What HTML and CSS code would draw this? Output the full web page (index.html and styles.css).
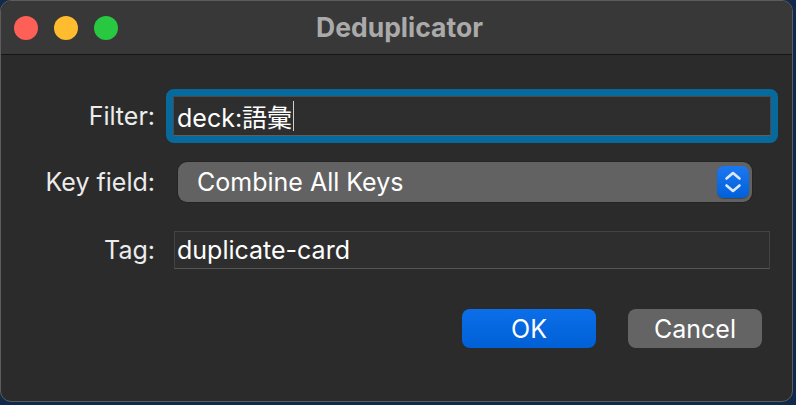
FILE: index.html
```html
<!DOCTYPE html>
<html lang="en">
<head>
<meta charset="utf-8">
<title>Deduplicator</title>
<link rel="stylesheet" href="styles.css">
</head>
<body>
<div class="window">
  <div class="titlebar">
    <div class="lights">
      <span class="light red"></span>
      <span class="light yellow"></span>
      <span class="light green"></span>
    </div>
    <div class="title">Deduplicator</div>
  </div>
  <div class="content">
    <div class="row row-filter">
      <label class="label">Filter:</label>
      <div class="focus-ring">
        <div class="field field-focused"><span class="value">deck:語彙</span><span class="caret"></span></div>
      </div>
    </div>
    <div class="row row-key">
      <label class="label">Key field:</label>
      <div class="popup">
        <span class="popup-text">Combine All Keys</span>
        <span class="stepper">
          <svg width="32" height="32" viewBox="0 0 32 32" aria-hidden="true">
            <polyline points="9.5,12.5 16,7 22.5,12.5" fill="none" stroke="#dbe7ff" stroke-width="2.6" stroke-linecap="round" stroke-linejoin="round"/>
            <polyline points="9.5,19.5 16,25 22.5,19.5" fill="none" stroke="#dbe7ff" stroke-width="2.6" stroke-linecap="round" stroke-linejoin="round"/>
          </svg>
        </span>
      </div>
    </div>
    <div class="row row-tag">
      <label class="label">Tag:</label>
      <div class="field field-tag"><span class="value">duplicate-card</span></div>
    </div>
    <div class="buttons">
      <button class="btn btn-primary">OK</button>
      <button class="btn btn-secondary">Cancel</button>
    </div>
  </div>
</div>
</body>
</html>
```

FILE: styles.css
```css
html, body {
  margin: 0;
  padding: 0;
}

body {
  width: 796px;
  height: 405px;
  background: #11294a;
  overflow: hidden;
  font-family: "Inter", "Noto Sans CJK JP", sans-serif;
  color: #ffffff;
}

.window {
  width: 791px;
  height: 400px;
  border: 1px solid #5c5c5c;
  border-radius: 11px;
  background: #2b2b2b;
  overflow: hidden;
  display: flex;
  flex-direction: column;
}

.titlebar {
  height: 53px;
  flex: 0 0 53px;
  background: #383838;
  border-bottom: 1px solid #161616;
  display: flex;
  align-items: center;
  position: relative;
}

.lights {
  display: flex;
  gap: 16px;
  padding-left: 13px;
}

.light {
  width: 24px;
  height: 24px;
  border-radius: 50%;
  display: block;
}

.red { background: #fe5f57; }
.yellow { background: #febc2e; }
.green { background: #28c840; }

.title {
  position: absolute;
  left: 0;
  right: 0;
  top: 0;
  bottom: 0;
  display: flex;
  align-items: center;
  justify-content: center;
  font-size: 26.5px;
  font-weight: 700;
  color: #aaaaaa;
  padding-left: 6px;
  padding-bottom: 1px;
}

.content {
  flex: 1;
  display: flex;
  flex-direction: column;
}

.row {
  display: flex;
  align-items: center;
}

.label {
  width: 154px;
  flex: 0 0 154px;
  text-align: right;
  font-size: 25px;
  color: #ececec;
}

.row-filter {
  margin-top: 34px;
  height: 54px;
}

.focus-ring {
  margin-left: 11px;
  width: 598px;
  height: 40px;
  border: 7px solid #08699c;
  border-radius: 8px;
}

.field {
  box-sizing: border-box;
  display: flex;
  align-items: center;
  background: #2e2e2e;
  font-size: 25px;
  color: #ffffff;
}

.field-focused {
  width: 598px;
  height: 40px;
  border: 1px solid #4a4a4a;
  border-bottom-color: #5e5e5e;
  padding-left: 3px;
}

.caret {
  display: block;
  width: 1px;
  height: 30px;
  background: #d0d0d0;
  margin-left: 1px;
}

.row-key {
  margin-top: 19px;
  height: 40px;
}

.popup {
  margin-left: 23px;
  width: 574px;
  height: 40px;
  box-sizing: border-box;
  border-radius: 9px;
  background: #626262;
  box-shadow: 0 0 0 1px rgba(0, 0, 0, 0.15);
  display: flex;
  align-items: center;
  justify-content: space-between;
  padding-left: 19px;
  padding-right: 3px;
}

.popup-text {
  font-size: 25px;
  color: #ffffff;
}

.stepper {
  width: 32px;
  height: 32px;
  border-radius: 7px;
  background: linear-gradient(#1c78f0, #0060da);
  display: block;
  box-shadow: 0 1px 1px rgba(0, 0, 0, 0.3);
}

.stepper svg {
  display: block;
}

.row-tag {
  margin-top: 29px;
  height: 38px;
}

.field-tag {
  margin-left: 19px;
  width: 596px;
  height: 38px;
  border: 1px solid #434343;
  border-bottom-color: #555555;
  padding-left: 2px;
}

.buttons {
  display: flex;
  justify-content: flex-end;
  gap: 32px;
  margin-top: 40px;
  padding-right: 30px;
}

.btn {
  width: 134px;
  height: 39px;
  border: none;
  border-radius: 8px;
  font-family: "Inter", sans-serif;
  font-size: 25px;
  color: #ffffff;
  padding: 0;
}

.btn-primary {
  background: linear-gradient(#0b6fe9, #0060d6);
}

.btn-secondary {
  background: #646464;
}
```
